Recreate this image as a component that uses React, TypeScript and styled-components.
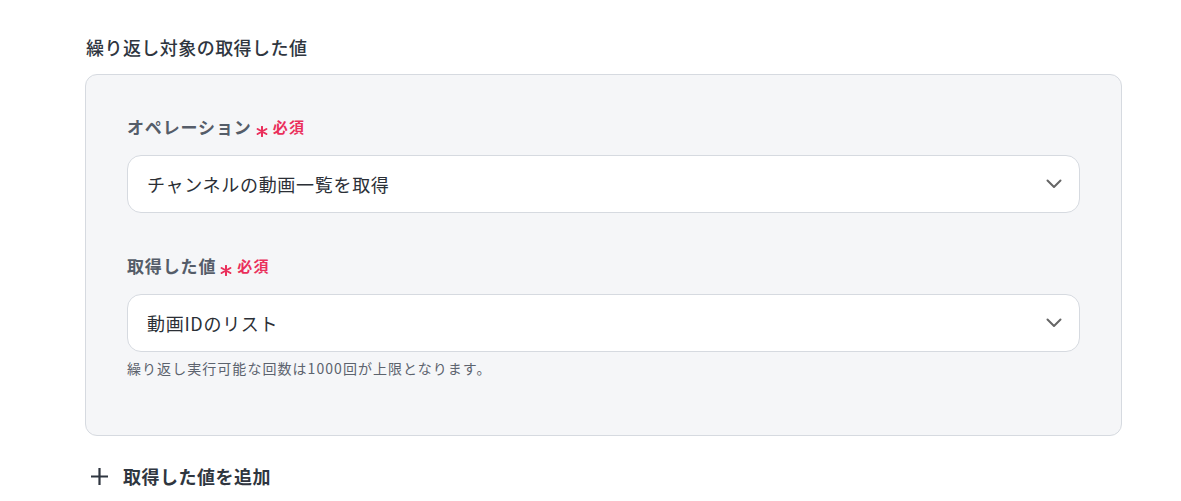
import React from "react";
import styled, { createGlobalStyle } from "styled-components";

const Global = createGlobalStyle`
  html, body { margin: 0; padding: 0; background: #ffffff; }
  body { font-family: "Noto Sans CJK JP", "Noto Sans", sans-serif; color: #333; }
`;

const Page = styled.div`
  width: 1181px;
  padding: 34px 0 0 85px;
  box-sizing: border-box;
`;

const SectionTitle = styled.div`
  font-size: 18px;
  letter-spacing: 0.45px;
  font-weight: 500;
  color: #2f3640;
  line-height: 26px;
  margin-left: 1px;
`;

const Card = styled.div`
  width: 1037px;
  margin-top: 14px;
  box-sizing: border-box;
  background: #f5f6f8;
  border: 1px solid #d6dae0;
  border-radius: 12px;
  padding: 40px 41px 57px 41px;
  display: flex;
  flex-direction: column;
  gap: 41px;
`;

const Field = styled.div`
  display: flex;
  flex-direction: column;
`;

const Label = styled.div`
  display: flex;
  align-items: center;
  font-size: 17px;
  letter-spacing: 0.85px;
  font-weight: 700;
  color: #555d69;
  line-height: 24px;
  margin-bottom: 16px;
`;

const Required = styled.span`
  display: inline-flex;
  align-items: center;
  margin-left: 4px;
  gap: 5px;
  color: #ea2f5b;
  font-size: 15px;
  letter-spacing: 1.3px;
  font-weight: 700;
`;

const Star = styled.svg`
  position: relative;
  top: 4px;
`;

const Select = styled.div`
  height: 58px;
  box-sizing: border-box;
  background: #ffffff;
  border: 1px solid #d6dae0;
  border-radius: 14px;
  display: flex;
  align-items: center;
  justify-content: space-between;
  padding: 0 17px 0 19px;
  font-size: 18px;
  letter-spacing: 0.7px;
  color: #2b2f36;
`;

const Help = styled.div`
  margin-top: 6px;
  font-size: 14px;
  letter-spacing: 1.05px;
  color: #5c636e;
  line-height: 20px;
`;

const AddRow = styled.div`
  display: flex;
  align-items: center;
  gap: 15px;
  margin-top: 27px;
  margin-left: 6px;
  font-size: 18px;
  letter-spacing: 0.5px;
  font-weight: 700;
  color: #2f3640;
`;

const Chevron = () => (
  <svg width="16" height="10" viewBox="0 0 16 10" fill="none" stroke="#666" strokeWidth="2" strokeLinecap="round" strokeLinejoin="round">
    <path d="M1.5 1.5L8 8l6.5-6.5" />
  </svg>
);

const Plus = () => (
  <svg width="17" height="17" viewBox="0 0 17 17" fill="none" stroke="#2f3640" strokeWidth="2.2">
    <path d="M8.5 0v17M0 8.5h17" />
  </svg>
);

const RequiredMark = () => (
  <Required>
    <Star width="12" height="11" viewBox="0 0 12 11" fill="none" stroke="#ea2f5b" strokeWidth="2" strokeLinecap="round">
      <path d="M6 0.8v9.4M1.6 3L10.4 8M1.6 8L10.4 3" />
    </Star>
    必須
  </Required>
);

export default function App() {
  return (
    <Page>
      <Global />
      <SectionTitle>繰り返し対象の取得した値</SectionTitle>
      <Card>
        <Field>
          <Label>
            オペレーション
            <RequiredMark />
          </Label>
          <Select>
            チャンネルの動画一覧を取得
            <Chevron />
          </Select>
        </Field>
        <Field>
          <Label>
            取得した値
            <RequiredMark />
          </Label>
          <Select>
            動画IDのリスト
            <Chevron />
          </Select>
          <Help>繰り返し実行可能な回数は1000回が上限となります。</Help>
        </Field>
      </Card>
      <AddRow>
        <Plus />
        取得した値を追加
      </AddRow>
    </Page>
  );
}
